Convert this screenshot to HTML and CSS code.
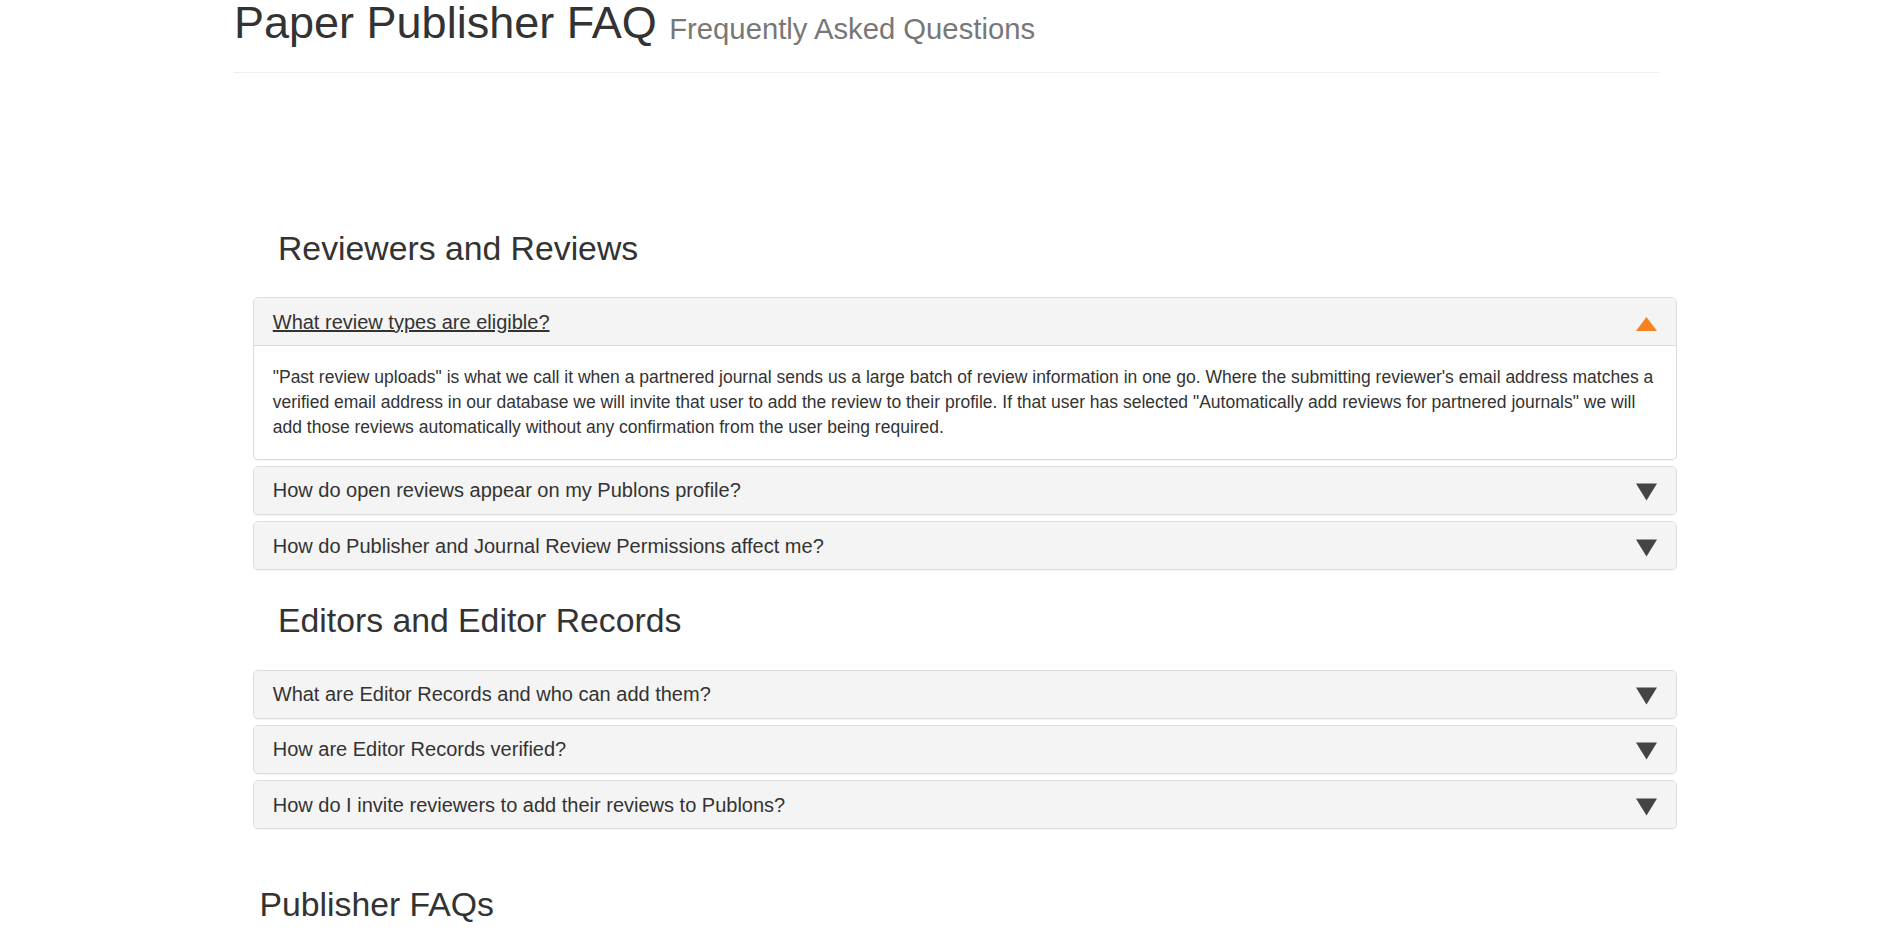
FILE: index.html
```html
<!DOCTYPE html>
<html lang="en">
<head>
<meta charset="utf-8">
<title>Paper Publisher FAQ</title>
<link rel="stylesheet" href="styles.css">
</head>
<body>
<div class="container">
  <div class="page-header">
    <h1>Paper Publisher FAQ <small>Frequently Asked Questions</small></h1>
  </div>

  <section class="faq-section first">
    <h2 class="section-title">Reviewers and Reviews</h2>
    <div class="panel-group">
      <div class="panel open">
        <div class="panel-heading">
          <h4 class="panel-title"><a href="#">What review types are eligible?</a></h4>
          <svg class="caret" viewBox="0 0 21 22" width="21" height="22"><polygon points="0,20 10.5,6 21,20" fill="#f5821f"/></svg>
        </div>
        <div class="panel-body">"Past review uploads" is what we call it when a partnered journal sends us a large batch of review information in one go. Where the submitting reviewer's email address matches a verified email address in our database we will invite that user to add the review to their profile. If that user has selected "Automatically add reviews for partnered journals" we will add those reviews automatically without any confirmation from the user being required.</div>
      </div>
      <div class="panel">
        <div class="panel-heading">
          <h4 class="panel-title">How do open reviews appear on my Publons profile?</h4>
          <svg class="caret" viewBox="0 0 21 22" width="21" height="22"><polygon points="0,4.6 21,4.6 10.5,21.4" fill="#444"/></svg>
        </div>
      </div>
      <div class="panel">
        <div class="panel-heading">
          <h4 class="panel-title">How do Publisher and Journal Review Permissions affect me?</h4>
          <svg class="caret" viewBox="0 0 21 22" width="21" height="22"><polygon points="0,4.6 21,4.6 10.5,21.4" fill="#444"/></svg>
        </div>
      </div>
    </div>
  </section>

  <section class="faq-section">
    <h2 class="section-title">Editors and Editor Records</h2>
    <div class="panel-group">
      <div class="panel">
        <div class="panel-heading">
          <h4 class="panel-title">What are Editor Records and who can add them?</h4>
          <svg class="caret" viewBox="0 0 21 22" width="21" height="22"><polygon points="0,4.6 21,4.6 10.5,21.4" fill="#444"/></svg>
        </div>
      </div>
      <div class="panel">
        <div class="panel-heading">
          <h4 class="panel-title">How are Editor Records verified?</h4>
          <svg class="caret" viewBox="0 0 21 22" width="21" height="22"><polygon points="0,4.6 21,4.6 10.5,21.4" fill="#444"/></svg>
        </div>
      </div>
      <div class="panel">
        <div class="panel-heading">
          <h4 class="panel-title">How do I invite reviewers to add their reviews to Publons?</h4>
          <svg class="caret" viewBox="0 0 21 22" width="21" height="22"><polygon points="0,4.6 21,4.6 10.5,21.4" fill="#444"/></svg>
        </div>
      </div>
    </div>
  </section>

  <h2 class="group-title">Publisher FAQs</h2>
</div>
</body>
</html>
```
FILE: styles.css
```css
html, body {
  margin: 0;
  padding: 0;
  background: #fff;
}

body {
  font-family: "Liberation Sans", Arial, Helvetica, sans-serif;
  font-size: 17.5px;
  line-height: 1.42857;
  color: #333;
}

.container {
  width: 1425px;
  margin: 0 auto;
}

.page-header {
  margin-top: -2px;
  padding-bottom: 12px;
  border-bottom: 1px solid #eee;
}

.page-header h1 {
  margin: 0 0 12.5px;
  font-size: 45px;
  font-weight: 500;
  line-height: 1.1;
  color: #333;
}

.page-header small {
  font-size: 29.25px;
  font-weight: normal;
  line-height: 1;
  color: #777;
  position: relative;
  top: 1px;
}

.faq-section {
  margin: 32px -18px 0 19px;
}

.faq-section.first {
  margin-top: 156.5px;
}

.section-title {
  margin: 0 0 30.5px 25px;
  font-size: 33.75px;
  font-weight: 500;
  line-height: 1.1;
  color: #333;
}

.group-title {
  margin: 57px 0 0 25.5px;
  font-size: 33.75px;
  font-weight: 500;
  line-height: 1.1;
  color: #333;
}

.panel-group {
  display: flex;
  flex-direction: column;
  gap: 6.25px;
}

.panel {
  background: #fff;
  border: 1px solid #ddd;
  border-radius: 5px;
  box-shadow: 0 1px 1px rgba(0, 0, 0, 0.05);
  overflow: hidden;
}

.panel-heading {
  display: flex;
  align-items: center;
  padding: 12.5px 18.75px;
  background: #f4f4f4;
}

.panel-title {
  flex: 1;
  margin: 0;
  font-size: 20px;
  font-weight: 500;
  line-height: 1.1;
  color: #333;
}

.panel-title a {
  color: #333;
  text-decoration: underline;
}

.caret {
  display: block;
  flex: none;
}

.panel-body {
  padding: 18.75px;
  border-top: 1px solid #ddd;
}
```
